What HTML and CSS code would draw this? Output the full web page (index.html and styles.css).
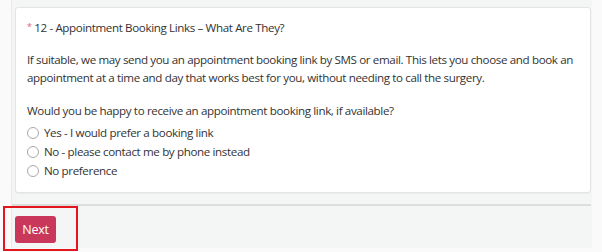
FILE: index.html
```html
<!DOCTYPE html>
<html lang="en">
<head>
    <meta charset="UTF-8">
    <title>Appointment Booking Links</title>
    <link rel="stylesheet" href="styles.css">
</head>
<body>
    <div class="page">
        <div class="card">
            <div class="question-title"><span class="required">*</span> 12 - Appointment Booking Links – What Are They?</div>
            <p class="intro">If suitable, we may send you an appointment booking link by SMS or email. This lets you choose and book an appointment at a time and day that works best for you, without needing to call the surgery.</p>
            <p class="ask">Would you be happy to receive an appointment booking link, if available?</p>
            <div class="options">
                <label class="option"><input type="radio" name="booking"> Yes - I would prefer a booking link</label>
                <label class="option"><input type="radio" name="booking"> No - please contact me by phone instead</label>
                <label class="option"><input type="radio" name="booking"> No preference</label>
            </div>
        </div>
        <div class="actions">
            <button class="btn">Next</button>
            <div class="highlight"></div>
        </div>
    </div>
</body>
</html>
```

FILE: styles.css
```css
* {
    margin: 0;
    padding: 0;
    box-sizing: border-box;
}

body {
    background: #fafafa;
    font-family: 'Open Sans', 'Noto Sans', sans-serif;
    font-size: 11.6px;
    letter-spacing: -0.37px;
    color: #333;
    height: 252px;
    overflow: hidden;
}

.page {
    margin-left: 11px;
    width: 581px;
    height: 248px;
    background: #f4f5f5;
    border-left: 1px solid #e8e9e9;
    padding: 7px 1px 0 3px;
}

.card {
    background: white;
    border: 1px solid #e3e4e4;
    border-radius: 3px;
    box-shadow: 0 1px 1px rgba(0,0,0,0.04);
    height: 186px;
    padding: 10px 11px 0 11px;
}

.question-title {
    height: 18px;
    line-height: 18px;
}

.required {
    color: #e0607a;
    font-size: 9px;
    vertical-align: 2px;
}

.intro {
    margin-top: 15px;
    line-height: 18px;
}

.ask {
    margin-top: 15px;
    line-height: 18px;
}

.options {
    margin-top: 3px;
    display: flex;
    flex-direction: column;
}

.option {
    display: flex;
    align-items: center;
    gap: 5px;
    height: 19px;
    line-height: 19px;
}

.option input {
    appearance: none;
    flex-shrink: 0;
    width: 12px;
    height: 12px;
    border: 1px solid #a9a9a9;
    border-radius: 50%;
    background: white;
}

.actions {
    position: relative;
    margin-left: -3px;
    margin-top: 11px;
    border-top: 2px solid #dcdddd;
    padding: 10px 0 0 3px;
}

.btn {
    background: #c9385a;
    color: white;
    border: none;
    border-radius: 3px;
    width: 41px;
    height: 27px;
    font-family: 'Open Sans', sans-serif;
    font-size: 12.5px;
    letter-spacing: -0.2px;
}

.highlight {
    position: absolute;
    left: -9px;
    top: 0;
    width: 75px;
    height: 45px;
    border: 2px solid #e3161e;
}
```
